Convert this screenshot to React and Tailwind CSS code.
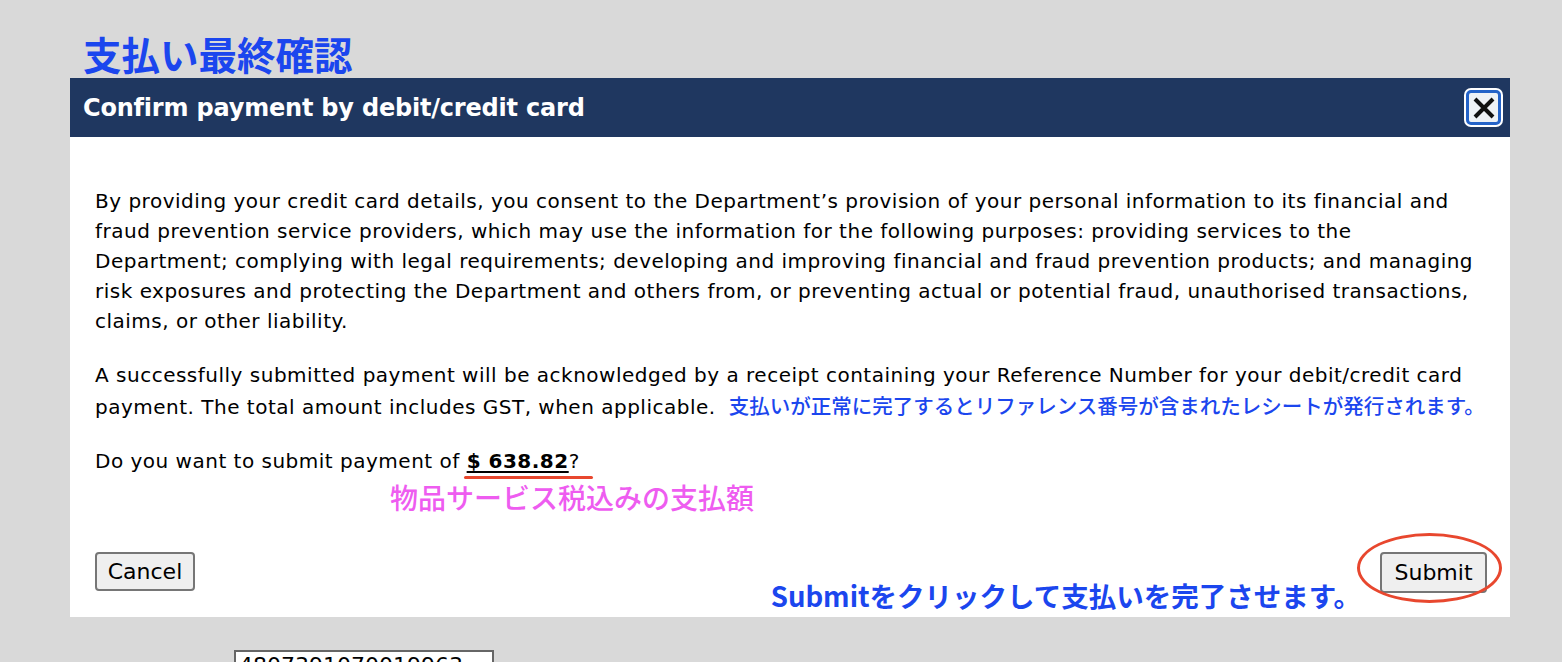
import React from 'react';

const body = '"DejaVu Sans", "Noto Sans CJK JP", sans-serif';
const jp = '"Noto Sans CJK JP", sans-serif';

const CloseButton = () => (
  <button className="w-[39px] h-[39px] rounded-[7px] bg-white p-[2px] flex">
    <span className="flex-1 rounded-[5px] border-[3px] border-[#2463c8] bg-[#eef2f6] flex items-center justify-center">
      <svg width="24" height="24" viewBox="0 0 24 24">
        <path d="M3 3 L21 21 M21 3 L3 21" stroke="#111" strokeWidth="4" strokeLinecap="butt" />
      </svg>
    </span>
  </button>
);

const App = () => {
  return (
    <div className="min-h-screen bg-[#d9d9d9] overflow-hidden" style={{ fontFamily: body }}>
      <h1 className="pl-[83px] pt-[30px] h-[78px] text-[38.5px] leading-[46px] font-bold text-[#1b46ee]" style={{ fontFamily: jp }}>
        支払い最終確認
      </h1>

      <div className="ml-[70px] w-[1440px] bg-white">
        <div className="h-[59px] bg-[#1f3760] flex items-center justify-between pl-[13px] pr-[7px]">
          <h2 className="text-white text-[24px] font-bold tracking-[-0.2px]">Confirm payment by debit/credit card</h2>
          <CloseButton />
        </div>

        <div className="pl-[25px] pr-[20px] pt-[49px] text-[20px] leading-[30px] tracking-[0.5px] text-black whitespace-nowrap">
          <p>
            By providing your credit card details, you consent to the Department’s provision of your personal information to its financial and<br />
            fraud prevention service providers, which may use the information for the following purposes: providing services to the<br />
            Department; complying with legal requirements; developing and improving financial and fraud prevention products; and managing<br />
            risk exposures and protecting the Department and others from, or preventing actual or potential fraud, unauthorised transactions,<br />
            claims, or other liability.
          </p>

          <p className="mt-[24px]">
            A successfully submitted payment will be acknowledged by a receipt containing your Reference Number for your debit/credit card<br />
            payment. The total amount includes GST, when applicable.
            <span className="ml-[13px] text-[20.5px] tracking-normal font-medium text-[#1b46ee]" style={{ fontFamily: jp }}>
              支払いが正常に完了するとリファレンス番号が含まれたレシートが発行されます。
            </span>
          </p>

          <p className="mt-[24px]">
            Do you want to submit payment of{' '}
            <span className="relative font-bold underline underline-offset-[3px]">
              $ 638.82
              <span className="absolute left-[-3px] right-[-24px] top-[27px] h-[3px] rounded-full bg-[#e8472e]"></span>
            </span>
            ?
          </p>

          <p className="ml-[295px] mt-[3px] text-[28px] leading-[36px] tracking-normal font-medium text-[#ee5cf0]" style={{ fontFamily: jp }}>
            物品サービス税込みの支払額
          </p>

          <div className="flex items-end justify-between pt-[37px] pb-[4px] tracking-normal">
            <button className="h-[39px] w-[100px] mb-[22px] rounded-[4px] border-2 border-[#767676] bg-[#efefef] text-[22px] text-black">
              Cancel
            </button>
            <div className="flex items-end">
              <span className="text-[27.5px] leading-[36px] font-bold text-[#1b46ee] mr-[19px]" style={{ fontFamily: jp }}>
                Submitをクリックして支払いを完了させます。
              </span>
              <div className="relative mb-[20px] mr-[3px]">
                <button className="h-[41px] w-[107px] rounded-[4px] border-2 border-[#767676] bg-[#efefef] text-[22px] text-black">
                  Submit
                </button>
                <span className="absolute left-[-23px] top-[-19px] w-[145px] h-[70px] rounded-[50%] border-[3px] border-[#e8472e]"></span>
              </div>
            </div>
          </div>
        </div>
      </div>

      <div className="ml-[234px] mt-[33px] w-[260px] h-[40px] border-2 border-[#666] bg-white px-[3px] text-[22px] leading-[28px]">
        4807391070019963
      </div>
    </div>
  );
};

export default App;
